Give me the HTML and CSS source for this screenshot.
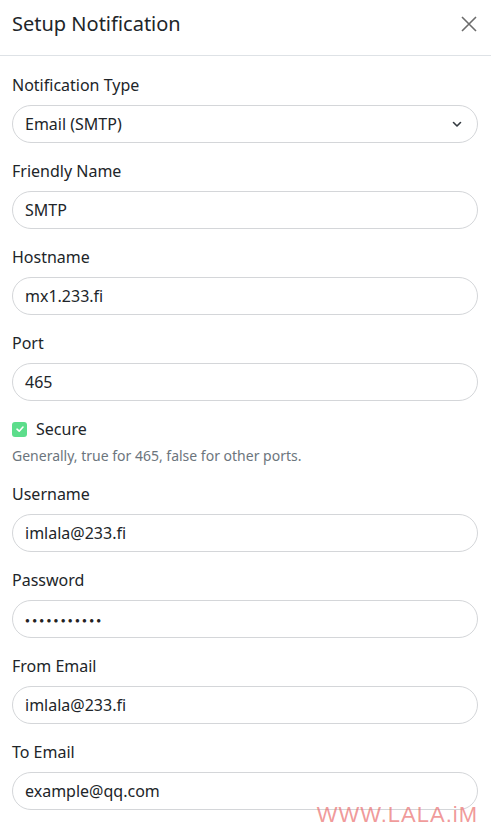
FILE: index.html
```html
<!DOCTYPE html>
<html>
<head>
<meta charset="utf-8">
<link rel="stylesheet" href="styles.css">
</head>
<body>
<div class="modal">
  <div class="header">
    <h5 class="title">Setup Notification</h5>
    <svg class="close" width="18" height="18" viewBox="0 0 18 18"><path d="M2 2L16 16M16 2L2 16" stroke="#6c6c6c" stroke-width="1.6" fill="none"/></svg>
  </div>
  <div class="body">
    <div class="group">
      <label class="label">Notification Type</label>
      <div class="input select">Email (SMTP)
        <svg class="chev" width="12" height="12" viewBox="0 0 12 12"><path d="M2.5 4.5L6 8L9.5 4.5" stroke="#343a40" stroke-width="1.6" fill="none" stroke-linecap="round" stroke-linejoin="round"/></svg>
      </div>
    </div>
    <div class="group">
      <label class="label">Friendly Name</label>
      <div class="input">SMTP</div>
    </div>
    <div class="group">
      <label class="label">Hostname</label>
      <div class="input">mx1.233.fi</div>
    </div>
    <div class="group">
      <label class="label">Port</label>
      <div class="input">465</div>
    </div>
    <div class="group">
      <div class="check">
        <span class="box"><svg width="10" height="10" viewBox="0 0 10 10"><path d="M2 5.2L4.2 7.2L8 3" stroke="#fff" stroke-width="1.6" fill="none" stroke-linecap="round" stroke-linejoin="round"/></svg></span>
        <span class="check-label">Secure</span>
      </div>
      <div class="help">Generally, true for 465, false for other ports.</div>
    </div>
    <div class="group">
      <label class="label">Username</label>
      <div class="input">imlala@233.fi</div>
    </div>
    <div class="group">
      <label class="label">Password</label>
      <div class="input dots">●●●●●●●●●●●</div>
    </div>
    <div class="group">
      <label class="label">From Email</label>
      <div class="input">imlala@233.fi</div>
    </div>
    <div class="group">
      <label class="label">To Email</label>
      <div class="input">example@qq.com</div>
    </div>
  </div>
  <div class="watermark">WWW.LALA.iM</div>
</div>
</body>
</html>
```
FILE: styles.css
```css
html, body {
  margin: 0;
  padding: 0;
  background: #fff;
}
body {
  font-family: "Noto Sans", "Open Sans", sans-serif;
  color: #212529;
  overflow: hidden;
}
.modal {
  position: relative;
  width: 491px;
  height: 832px;
}
.header {
  height: 56px;
  box-sizing: border-box;
  border-bottom: 1px solid #dee2e6;
  display: flex;
  align-items: flex-start;
  justify-content: space-between;
  padding: 10px 13px 0 12px;
}
.title {
  margin: 0;
  font-size: 20px;
  font-weight: 400;
  line-height: 28px;
  color: #212529;
}
.close {
  margin-top: 5px;
}
.body {
  padding: 17px 13px 0 12px;
}
.group {
  margin-bottom: 16px;
}
.label {
  display: block;
  font-size: 16px;
  line-height: 24px;
  margin-bottom: 8px;
}
.input {
  height: 38px;
  box-sizing: border-box;
  border: 1px solid #d4d6d9;
  border-radius: 19px;
  padding: 0 12px;
  font-size: 16px;
  display: flex;
  align-items: center;
  justify-content: space-between;
}
.select {
  padding-right: 14px;
}
.dots {
  font-size: 8px;
  letter-spacing: 2.3px;
  color: #222;
}
.check {
  display: flex;
  align-items: center;
  height: 24px;
}
.box {
  width: 15px;
  height: 15px;
  border-radius: 3px;
  background: #5cdd8b;
  display: flex;
  align-items: center;
  justify-content: center;
  margin-right: 9px;
}
.check-label {
  font-size: 16px;
  line-height: 24px;
}
.help {
  margin-top: 5px;
  font-size: 14px;
  line-height: 20px;
  color: #6c757d;
}
.watermark {
  position: absolute;
  right: 13px;
  bottom: 6px;
  font-family: "Liberation Sans", Arial, sans-serif;
  font-size: 22px;
  line-height: 22px;
  color: rgba(234, 110, 110, 0.7);
  letter-spacing: 1px;
}
```
